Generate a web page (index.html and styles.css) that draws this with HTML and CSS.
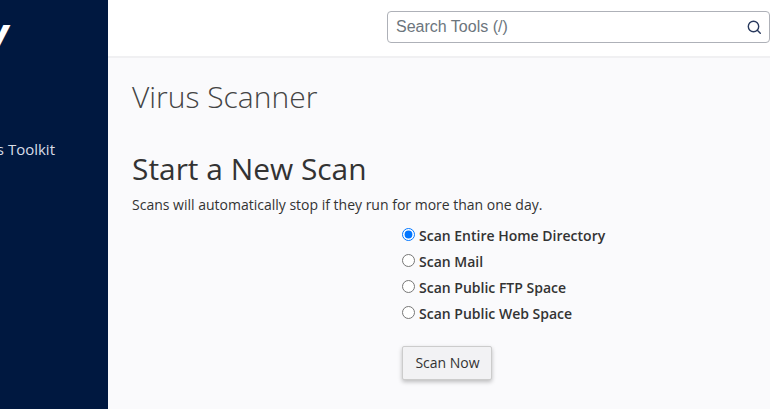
FILE: index.html
```html
<!DOCTYPE html>
<html lang="en">
<head>
<meta charset="utf-8">
<title>Virus Scanner</title>
<link rel="stylesheet" href="styles.css">
</head>
<body>
<div class="app">
  <aside class="sidebar">
    <div class="logo">y</div>
    <div class="nav-item">WordPress Toolkit</div>
  </aside>
  <div class="main">
    <header class="topbar">
      <div class="search">
        <span class="search-text">Search Tools (/)</span>
        <svg class="search-icon" viewBox="0 0 16 16" width="16" height="16" aria-hidden="true">
          <circle cx="7.5" cy="7.5" r="5.2" fill="none" stroke="#293a5e" stroke-width="1.4"/>
          <path d="M11.3 11.3l3 3" fill="none" stroke="#293a5e" stroke-width="1.4" stroke-linecap="round"/>
        </svg>
      </div>
    </header>
    <main class="content">
      <h1 class="page-title">Virus Scanner</h1>
      <h2 class="section-title">Start a New Scan</h2>
      <p class="note">Scans will automatically stop if they run for more than one day.</p>
      <form class="scan-form">
        <label class="option"><input type="radio" name="scan" checked><span>Scan Entire Home Directory</span></label>
        <label class="option"><input type="radio" name="scan"><span>Scan Mail</span></label>
        <label class="option"><input type="radio" name="scan"><span>Scan Public FTP Space</span></label>
        <label class="option"><input type="radio" name="scan"><span>Scan Public Web Space</span></label>
        <button class="btn" type="button">Scan Now</button>
      </form>
    </main>
  </div>
</div>
</body>
</html>
```
FILE: styles.css
```css
* { box-sizing: border-box; }
html, body { margin: 0; height: 100%; overflow: hidden; }
body { font-family: "Open Sans", sans-serif; color: #333; background: #fafafc; }
.app { display: flex; width: 770px; height: 409px; }
.sidebar {
  width: 108px;
  flex: none;
  background: #001840;
  overflow: hidden;
  display: flex;
  flex-direction: column;
  align-items: flex-end;
  padding-right: 53px;
}
.logo {
  color: #fff;
  font-size: 44px;
  font-weight: 700;
  font-style: italic;
  line-height: 50px;
  margin-top: 8px;
  width: 0;
  white-space: nowrap;
  direction: rtl;
  transform: translateX(-47px);
}
.nav-item {
  color: #d8dce6;
  font-size: 15px;
  line-height: 20px;
  margin-top: 81px;
  white-space: nowrap;
}
.main { flex: 1; min-width: 0; display: flex; flex-direction: column; }
.topbar {
  height: 58px;
  flex: none;
  background: #fff;
  border-bottom: 2px solid #f0f0f2;
  display: flex;
  justify-content: flex-end;
  padding-top: 11px;
}
.search {
  width: 383px;
  height: 32px;
  background: #fff;
  border: 1px solid #aeb1b8;
  border-radius: 4px;
  display: flex;
  align-items: center;
  justify-content: space-between;
  padding: 0 7px 0 8px;
}
.search-text { font-family: "Liberation Sans", sans-serif; font-size: 16px; color: #6c757d; }
.search-icon { display: block; }
.content { flex: 1; padding: 20px 24px 0; }
.page-title { margin: 0; font-size: 30px; font-weight: 300; line-height: 38px; color: #444; }
.section-title { margin: 34px 0 0; font-size: 29.9px; font-weight: 400; line-height: 38px; color: #333; }
.note { margin: 7px 0 0; font-size: 14px; line-height: 20px; color: #333; }
.scan-form { margin-left: 270px; margin-top: 7px; display: flex; flex-direction: column; align-items: flex-start; }
.option { display: flex; align-items: center; height: 26px; font-size: 14px; font-weight: 600; color: #333; }
.option input { width: 13px; height: 13px; margin: 0 4px 2px 0; accent-color: #0075ff; }
.btn {
  margin-top: 20px;
  width: 90px;
  height: 34px;
  font-family: "Open Sans", sans-serif;
  font-size: 14px;
  color: #333;
  background: #f2f2f4;
  border: 1px solid #ccc;
  border-radius: 2px;
  box-shadow: 0 2px 4px rgba(0,0,0,.25);
  padding: 0 0 2px 1px;
}
```
